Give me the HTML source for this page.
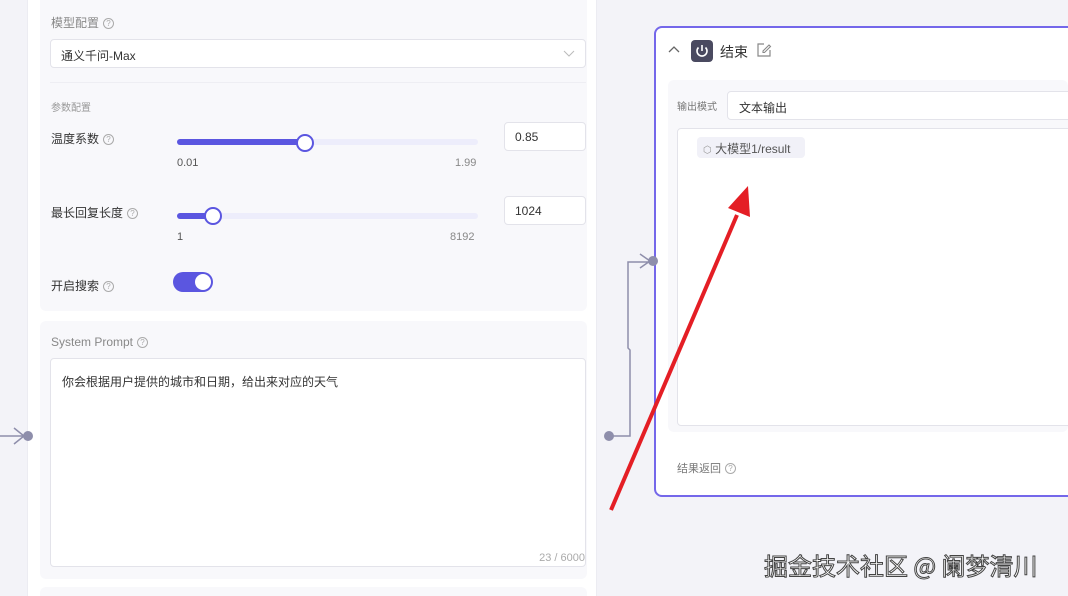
<!DOCTYPE html>
<html><head><meta charset="utf-8"><style>
*{box-sizing:border-box;margin:0;padding:0}
html,body{width:1068px;height:596px;overflow:hidden}
body{background:#f3f3f8;font-family:"Liberation Sans","Noto Sans CJK SC",sans-serif;position:relative;color:#333}
.abs{position:absolute}
.q{display:inline-block;width:11px;height:11px;border:1px solid #aaa;border-radius:50%;font-size:8px;line-height:9px;text-align:center;color:#aaa;vertical-align:1px;margin-left:4px}
.inp{background:#fff;border:1px solid #e3e3ea;border-radius:4px}
.lbl{font-size:12px;color:#333}
</style></head><body>
<div class="abs" style="left:27px;top:0;width:570px;height:596px;background:#fff;border-left:1px solid #ececf2;border-right:1px solid #ececf2"></div>
<div class="abs" style="left:40px;top:0;width:547px;height:311px;background:#f8f8fb;border-radius:0 0 6px 6px"></div>
<div class="abs" style="left:40px;top:321px;width:547px;height:258px;background:#f8f8fb;border-radius:6px"></div>
<div class="abs" style="left:40px;top:587px;width:547px;height:9px;background:#f8f8fb;border-radius:6px 6px 0 0"></div>

<div class="abs" style="left:51px;top:14px;font-size:12px;color:#888">模型配置<span class="q">?</span></div>
<div class="abs inp" style="left:50px;top:39px;width:536px;height:29px;font-size:12px;padding:7px 10px;color:#333">通义千问-Max
<svg class="abs" style="right:10px;top:10px" width="12" height="8"><path d="M1 1 L6 6 L11 1" stroke="#bbb" fill="none"/></svg></div>
<div class="abs" style="left:50px;top:82px;width:536px;height:1px;background:#eeeef3"></div>
<div class="abs" style="left:51px;top:99px;font-size:10px;color:#999">参数配置</div>

<div class="abs lbl" style="left:51px;top:130px">温度系数<span class="q">?</span></div>
<div class="abs" style="left:177px;top:139px;width:301px;height:6px;background:#ededfb;border-radius:3px"></div>
<div class="abs" style="left:177px;top:139px;width:128px;height:6px;background:#5b56e0;border-radius:3px"></div>
<div class="abs" style="left:296px;top:134px;width:18px;height:18px;background:#fff;border:2px solid #5b56e0;border-radius:50%"></div>
<div class="abs" style="left:177px;top:157px;font-size:11px;color:#555">0.01</div>
<div class="abs" style="left:455px;top:157px;font-size:11px;color:#888">1.99</div>
<div class="abs inp" style="left:504px;top:122px;width:82px;height:29px;font-size:12px;padding:7px 10px">0.85</div>

<div class="abs lbl" style="left:51px;top:204px">最长回复长度<span class="q">?</span></div>
<div class="abs" style="left:177px;top:213px;width:301px;height:6px;background:#ededfb;border-radius:3px"></div>
<div class="abs" style="left:177px;top:213px;width:36px;height:6px;background:#5b56e0;border-radius:3px"></div>
<div class="abs" style="left:204px;top:207px;width:18px;height:18px;background:#fff;border:2px solid #5b56e0;border-radius:50%"></div>
<div class="abs" style="left:177px;top:231px;font-size:11px;color:#555">1</div>
<div class="abs" style="left:450px;top:231px;font-size:11px;color:#888">8192</div>
<div class="abs inp" style="left:504px;top:196px;width:82px;height:29px;font-size:12px;padding:7px 10px">1024</div>

<div class="abs lbl" style="left:51px;top:277px">开启搜索<span class="q">?</span></div>
<div class="abs" style="left:173px;top:272px;width:40px;height:20px;background:#5b56e0;border-radius:10px"><div class="abs" style="right:2px;top:2px;width:16px;height:16px;background:#fff;border-radius:50%"></div></div>

<div class="abs" style="left:51px;top:335px;font-size:12px;color:#888">System Prompt<span class="q">?</span></div>
<div class="abs inp" style="left:50px;top:358px;width:536px;height:209px;font-size:12px;padding:14px 11px;color:#333">你会根据用户提供的城市和日期，给出来对应的天气
<div class="abs" style="right:0;bottom:2px;font-size:11px;color:#aaa">23 / 6000</div></div>

<div class="abs" style="left:654px;top:26px;width:430px;height:471px;background:#fff;border:2px solid #7467ea;border-radius:8px"></div>
<svg class="abs" style="left:667px;top:44px" width="14" height="10"><path d="M2 8 L7 3 L12 8" stroke="#666" fill="none" stroke-width="1.3"/></svg>
<div class="abs" style="left:691px;top:40px;width:22px;height:22px;background:#4a4a60;border-radius:4px"></div>
<svg class="abs" style="left:691px;top:40px" width="22" height="22"><path d="M7.5 7.5 A5 5 0 1 0 14.5 7.5" stroke="#fff" fill="none" stroke-width="1.6"/><path d="M11 5 V11" stroke="#fff" stroke-width="1.6"/></svg>
<div class="abs" style="left:720px;top:42px;font-size:14px;color:#333">结束</div>
<svg class="abs" style="left:756px;top:42px" width="16" height="16"><path d="M8 2 H2 V14 H14 V8" stroke="#888" fill="none" stroke-width="1.2"/><path d="M7 9 L13 3 L14.5 4.5 L8.5 10.5 H7 Z" stroke="#888" fill="none" stroke-width="1.1"/></svg>
<div class="abs" style="left:668px;top:80px;width:400px;height:352px;background:#f8f8fb;border-radius:6px"></div>
<div class="abs" style="left:677px;top:98px;font-size:10px;color:#777">输出模式</div>
<div class="abs inp" style="left:727px;top:91px;width:360px;height:29px;font-size:12px;padding:7px 11px">文本输出</div>
<div class="abs inp" style="left:677px;top:128px;width:400px;height:298px"></div>
<div class="abs" style="left:697px;top:137px;width:108px;height:21px;background:#f1f1f8;border-radius:4px;font-size:12px;color:#555;padding:3px 6px"><span style="color:#999;font-size:10px">⬡</span> 大模型1/result</div>
<div class="abs" style="left:677px;top:460px;font-size:11px;color:#777">结果返回<span class="q">?</span></div>

<svg class="abs" style="left:0;top:0" width="1068" height="596">
<path d="M0 436 H26 M14 428 L24 436 L14 444" stroke="#8e8eab" fill="none" stroke-width="1.5"/>
<circle cx="28" cy="436" r="5" fill="#8e8eab"/>
<circle cx="609" cy="436" r="5" fill="#8e8eab"/>
<path d="M609 436 H630 V350 L628 348 V262 H652 M640 254 L650 261 L640 268" stroke="#8e8eab" fill="none" stroke-width="1.5"/>
<circle cx="653" cy="261" r="5" fill="#8e8eab"/>
<path d="M611 510 L737 215" stroke="#e41e25" stroke-width="4"/>
<path d="M748 186 L728 208 L750 217 Z" fill="#e41e25"/>
</svg>
<div class="abs" style="left:764px;top:547px;font-size:24px;color:#fff;-webkit-text-stroke:1px #444;font-family:'Noto Sans CJK SC',sans-serif;white-space:nowrap">掘金技术社区 @ 阑梦清川</div>
</body></html>
